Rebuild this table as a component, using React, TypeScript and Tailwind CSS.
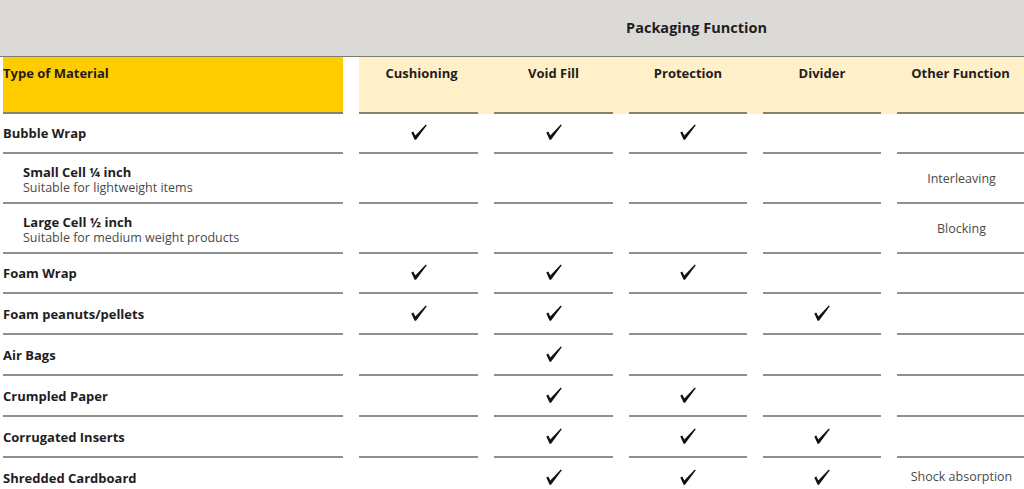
import React from "react";

const FUNCS = ["Cushioning", "Void Fill", "Protection", "Divider", "Other Function"];

type Row = {
  name: string;
  sub?: string;
  indent?: boolean;
  checks: boolean[];
  other?: string;
  h: string;
};

const ROWS: Row[] = [
  { name: "Bubble Wrap", checks: [true, true, true, false], h: "h-[40px]" },
  {
    name: "Small Cell ¼ inch",
    sub: "Suitable for lightweight items",
    indent: true,
    checks: [false, false, false, false],
    other: "Interleaving",
    h: "h-[50px]",
  },
  {
    name: "Large Cell ½ inch",
    sub: "Suitable for medium weight products",
    indent: true,
    checks: [false, false, false, false],
    other: "Blocking",
    h: "h-[50px]",
  },
  { name: "Foam Wrap", checks: [true, true, true, false], h: "h-[40px]" },
  { name: "Foam peanuts/pellets", checks: [true, true, false, true], h: "h-[41px]" },
  { name: "Air Bags", checks: [false, true, false, false], h: "h-[41px]" },
  { name: "Crumpled Paper", checks: [false, true, true, false], h: "h-[41px]" },
  { name: "Corrugated Inserts", checks: [false, true, true, true], h: "h-[41px]" },
  { name: "Shredded Cardboard", checks: [false, true, true, true], other: "Shock absorption", h: "h-[41px]" },
];

function Check() {
  return (
    <svg width="16" height="16" viewBox="0 0 16 16" className="block">
      <path d="M0.3 8.6 L2.3 7.6 L4.3 11.6 L14.8 0.4 L15.8 1.2 L5 15.8 L3.6 15.8 Z" fill="#111" />
    </svg>
  );
}

export default function App() {
  return (
    <div className="w-[1024px] h-[489px] overflow-hidden bg-white font-['Open_Sans',_'Liberation_Sans',_sans-serif] text-[#1f1d1d]">
      {/* grey band */}
      <div className="h-[57px] bg-[#dcdad6] border-b-[1.5px] border-[#7f7c72] flex items-center">
        <div className="ml-[359px] flex-1 pl-[10px] text-center text-[14.5px] font-bold pb-[1px]">
          Packaging Function
        </div>
      </div>

      {/* header row */}
      <div className="flex pl-[3px] h-[57px]">
        <div className="w-[340px] bg-[#ffcc00] border-b-2 border-[#8a8266] pt-[7px] text-[13px] font-bold">
          Type of Material
        </div>
        <div className="ml-[16px] flex-1 bg-[#fff0c9] grid grid-cols-[119px_119px_118px_118px_1fr] gap-x-4">
          {FUNCS.map((f, i) => (
            <div
              key={f}
              className={`border-b-2 border-[#8a8266] pt-[7px] text-center text-[13px] font-bold ${i === 0 ? "pl-[6px]" : ""}`}
            >
              {f}
            </div>
          ))}
        </div>
      </div>

      {/* body */}
      <div className="pl-[3px]">
        {ROWS.map((r) => (
          <div key={r.name} className={`grid grid-cols-[340px_119px_119px_118px_118px_1fr] gap-x-4 ${r.h}`}>
            <div className={`border-b-2 border-[#8f8f8f] flex flex-col justify-center ${r.indent ? "pl-[20px] pt-[3px]" : ""}`}>
              <div className="text-[13px] font-bold leading-[16px]">{r.name}</div>
              {r.sub && <div className="text-[12.5px] leading-[16px] text-[#4a4a4a]">{r.sub}</div>}
            </div>
            {r.checks.map((c, i) => (
              <div key={i} className="border-b-2 border-[#8f8f8f] flex items-center justify-center pb-[2px]">
                {c && <Check />}
              </div>
            ))}
            <div className={`border-b-2 border-[#8f8f8f] flex items-center justify-center pl-[2px] text-[12.5px] text-[#4a4a4a] ${r.indent ? "pt-[3px]" : ""}`}>
              {r.other}
            </div>
          </div>
        ))}
      </div>
    </div>
  );
}
